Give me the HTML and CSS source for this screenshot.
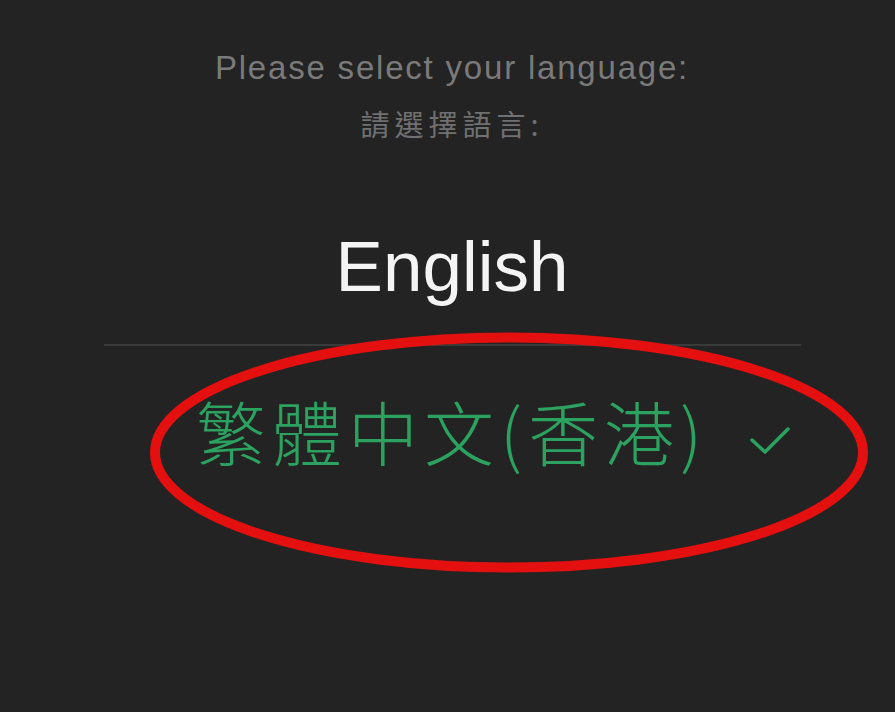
FILE: index.html
```html
<!DOCTYPE html>
<html lang="zh-Hant">
<head>
<meta charset="utf-8">
<title>Language</title>
<link rel="stylesheet" href="styles.css">
</head>
<body>
<main class="screen">
  <p class="prompt">Please select your language:</p>
  <p class="prompt-zh">請選擇語言:</p>
  <div class="option english">English</div>
  <div class="divider"></div>
  <div class="option chinese">
    <span class="label">繁體中文(香港)<span class="check"><svg width="42" height="30" viewBox="0 0 42 30"><path d="M3 14 L16 26 L39 3" fill="none" stroke="#2ba25f" stroke-width="3.5" stroke-linecap="round" stroke-linejoin="round"/></svg></span></span>
  </div>
  <svg class="circle" width="895" height="712" viewBox="0 0 895 712">
    <ellipse cx="509" cy="452.5" rx="354" ry="115" fill="none" stroke="#e3100f" stroke-width="10"/>
  </svg>
</main>
</body>
</html>
```
FILE: styles.css
```css
html, body {
  margin: 0;
  padding: 0;
  background: #232323;
}
.screen {
  position: relative;
  width: 895px;
  height: 712px;
  overflow: hidden;
  padding-left: 9px;
  box-sizing: border-box;
  display: flex;
  flex-direction: column;
  align-items: center;
}
.prompt {
  margin: 48px 0 0;
  font-family: "Liberation Sans", Arial, sans-serif;
  font-size: 33px;
  line-height: 40px;
  letter-spacing: 1.8px;
  color: #7a7a7a;
}
.prompt-zh {
  margin: 15px 0 0;
  font-family: "Noto Sans CJK TC", sans-serif;
  font-size: 29px;
  line-height: 40px;
  letter-spacing: 5px;
  color: #707070;
}
.option {
  text-align: center;
}
.english {
  margin-top: 84px;
  font-family: "Liberation Sans", Arial, sans-serif;
  font-size: 71px;
  line-height: 80px;
  color: #f4f4f4;
}
.divider {
  margin-top: 37px;
  width: 697px;
  height: 2px;
  background: #3a3a3a;
}
.chinese {
  margin-top: 45px;
  font-family: "Noto Sans CJK TC", sans-serif;
  font-weight: 300;
  font-size: 70px;
  line-height: 80px;
  letter-spacing: 6px;
  color: #2ba25f;
}
.label {
  position: relative;
}
.check {
  position: absolute;
  left: calc(100% + 41px);
  top: 46px;
  width: 42px;
  height: 30px;
}
.check svg {
  display: block;
}
.circle {
  position: absolute;
  left: 0;
  top: 0;
  pointer-events: none;
}
```
